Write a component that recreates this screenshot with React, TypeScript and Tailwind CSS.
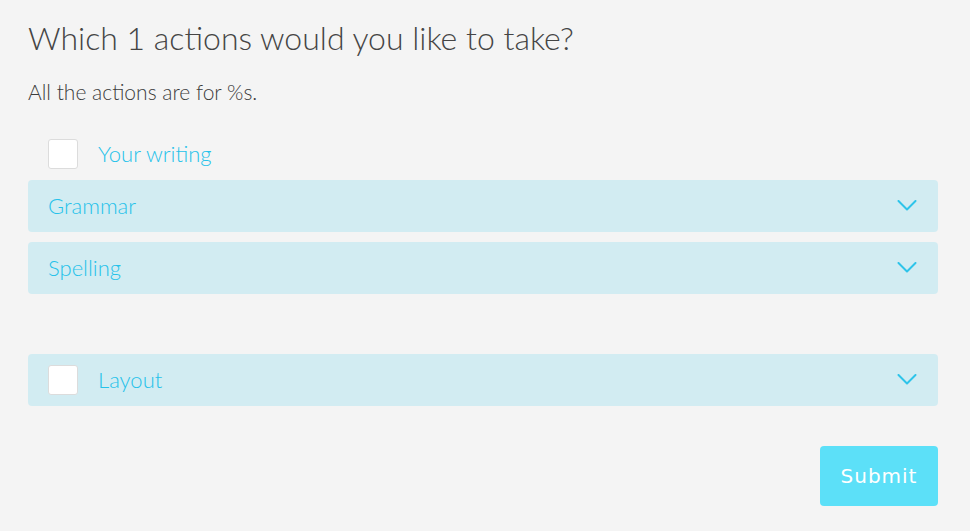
import React from 'react';

const Chevron = () => (
  <svg width="20" height="11" viewBox="0 0 20 11" fill="none" className="shrink-0 mr-[1px] mb-[2px]">
    <polyline points="1.5,1 10,9.5 18.5,1" stroke="#2ec4ea" strokeWidth="2" strokeLinecap="round" strokeLinejoin="round" />
  </svg>
);

const Box = () => (
  <span className="block w-[30px] h-[30px] shrink-0 rounded-[3px] bg-white border border-[#dcdcdc]" />
);

const Bar = ({ label, checkbox }: { label: string; checkbox?: boolean }) => (
  <div className="flex items-center h-[52px] pl-5 pr-5 rounded-[4px] bg-[#d2ecf2]">
    {checkbox && <Box />}
    <span className={`flex-1 pb-[2px] text-[22px] font-light text-[#26c2ea] ${checkbox ? 'ml-5' : ''}`}>{label}</span>
    <Chevron />
  </div>
);

export default function App() {
  return (
    <div className="min-h-[531px] w-full bg-[#f4f4f4] pl-7 pr-8 pt-[18px] font-['Lato','Noto_Sans',sans-serif]">
      <h1 className="text-[32px] leading-[40px] text-[#454545] font-light">Which 1 actions would you like to take?</h1>
      <p className="mt-[22px] text-[21px] leading-[24px] text-[#3c3c3c] font-light">All the actions are for %s.</p>
      <div className="mt-[35px] flex items-center pl-5 h-[30px]">
        <Box />
        <span className="ml-5 pb-[2px] text-[22px] font-light text-[#26c2ea]">Your writing</span>
      </div>
      <div className="mt-[11px] flex flex-col gap-[10px]">
        <Bar label="Grammar" />
        <Bar label="Spelling" />
      </div>
      <div className="mt-[60px]">
        <Bar label="Layout" checkbox />
      </div>
      <div className="mt-10 flex justify-end">
        <button className="w-[118px] h-[60px] rounded-[4px] bg-[#5ce0f8] text-white text-[20px] tracking-[1px] font-['DejaVu_Sans',sans-serif]">
          Submit
        </button>
      </div>
    </div>
  );
}
